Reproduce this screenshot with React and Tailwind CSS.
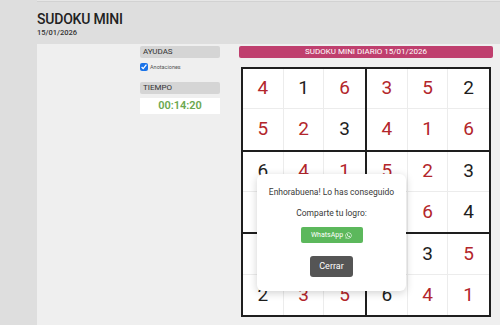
import { FaWhatsapp } from 'react-icons/fa'

const grid = [
  [[4, 'r'], [1, 'b'], [6, 'r'], [3, 'r'], [5, 'r'], [2, 'b']],
  [[5, 'r'], [2, 'r'], [3, 'b'], [4, 'r'], [1, 'r'], [6, 'r']],
  [[6, 'b'], [4, 'r'], [1, 'r'], [5, 'r'], [2, 'r'], [3, 'b']],
  [[3, 'b'], [5, 'r'], [2, 'r'], [1, 'r'], [6, 'r'], [4, 'b']],
  [[1, 'r'], [6, 'r'], [4, 'b'], [2, 'r'], [3, 'b'], [5, 'r']],
  [[2, 'b'], [3, 'r'], [5, 'r'], [6, 'b'], [4, 'r'], [1, 'r']],
]

const Box = ({ rowStart, colStart }) => (
  <div className="grid grid-cols-3 grid-rows-2 border border-[#1e1e1e]">
    {[0, 1].map((r) =>
      [0, 1, 2].map((c) => {
        const [n, t] = grid[rowStart + r][colStart + c]
        return (
          <div
            key={`${r}-${c}`}
            className={`flex items-center justify-center bg-white text-[19px] ${
              c < 2 ? 'border-r border-[#ececec]' : ''
            } ${r === 0 ? 'border-b border-[#ececec]' : ''} ${
              t === 'r' ? 'text-[#b3262b]' : 'text-[#1e1e1e]'
            }`}
          >
            {n}
          </div>
        )
      }),
    )}
  </div>
)

const Modal = () => (
  <div className="absolute left-[16px] top-[107px] flex h-[117px] w-[149px] flex-col items-center rounded-md bg-white pt-[12px] shadow-[0_2px_8px_rgba(0,0,0,0.18)]">
    <p className="text-[8.5px] leading-[12px] text-[#3a3a3a]">Enhorabuena! Lo has conseguido</p>
    <p className="mt-[9px] text-[8.5px] leading-[12px] text-[#3a3a3a]">Comparte tu logro:</p>
    <button
      type="button"
      className="mt-[8px] flex h-[16px] w-[62px] items-center justify-center gap-[2px] rounded-[2px] bg-[#5cb85c] text-[7px] text-white"
    >
      WhatsApp <FaWhatsapp className="h-[7px] w-[7px]" />
    </button>
    <button
      type="button"
      className="mt-[13px] flex h-[21px] w-[43px] items-center justify-center rounded-[3px] bg-[#555555] text-[9px] text-white"
    >
      Cerrar
    </button>
  </div>
)

export default function App() {
  return (
    <div className="min-h-[325px] bg-[#dedede] font-['Roboto',sans-serif] text-[#222]">
      <div className="ml-[37px] h-[2px] border-b border-[#d2d2d2] bg-[#e6e6e6]" />
      <header className="h-[42px] pl-[37px] pt-[8px]">
        <h1 className="text-[14px] font-medium leading-[18px] tracking-[-0.2px] text-[#222]">SUDOKU MINI</h1>
        <p className="text-[7.5px] font-medium leading-[10px] text-[#333]">15/01/2026</p>
      </header>
      <div className="ml-[37px] flex h-[281px] bg-[#efefef] pt-[2px]">
        <div className="w-[103px]" />
        <aside className="w-[80px]">
          <div className="flex h-[12px] items-center rounded-[2px] bg-[#d5d5d5] px-[3px] text-[8px] text-[#333]">
            AYUDAS
          </div>
          <label className="mt-[5px] flex items-center gap-[2px]">
            <input type="checkbox" defaultChecked className="m-0 h-[8px] w-[8px] accent-[#1a73e8]" />
            <span className="text-[5.5px] text-[#555]">Anotaciones</span>
          </label>
          <div className="mt-[11px] flex h-[12px] items-center rounded-[2px] bg-[#d5d5d5] px-[3px] text-[8px] text-[#333]">
            TIEMPO
          </div>
          <div className="mt-[4px] flex h-[16px] items-center justify-center bg-white text-[11px] font-semibold text-[#6aa84f]">
            00:14:20
          </div>
        </aside>
        <main className="ml-[19px] w-[254px]">
          <div className="flex h-[12px] items-center justify-center rounded-[2px] bg-[#bf3f6e] text-[8px] text-white">
            SUDOKU MINI DIARIO 15/01/2026
          </div>
          <div className="relative ml-[2px] mt-[9px] h-[250px] w-[250px]">
            <div className="grid h-full w-full grid-cols-2 grid-rows-3 border border-[#1e1e1e]">
              <Box rowStart={0} colStart={0} />
              <Box rowStart={0} colStart={3} />
              <Box rowStart={2} colStart={0} />
              <Box rowStart={2} colStart={3} />
              <Box rowStart={4} colStart={0} />
              <Box rowStart={4} colStart={3} />
            </div>
            <Modal />
          </div>
        </main>
      </div>
    </div>
  )
}
